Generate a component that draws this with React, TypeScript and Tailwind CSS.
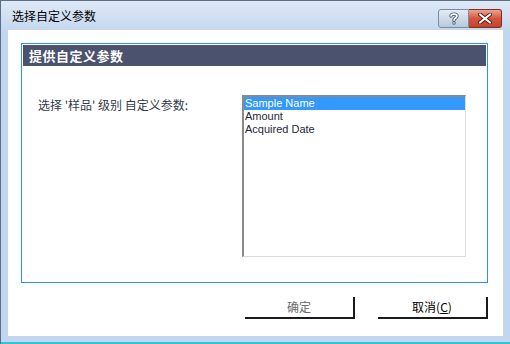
import React from "react";

const cjk = "font-['SimSun','Noto_Sans_CJK_SC',sans-serif]";

const items = ["Sample Name", "Amount", "Acquired Date"];

const FlatButton = ({ children, dim }: { children: React.ReactNode; dim?: boolean }) => (
  <div
    className={`w-[110px] h-[22px] flex items-center justify-center border-r-2 border-b-2 border-r-[#1a1a1a] border-b-[#1a1a1a] text-[12px] ${cjk} ${dim ? "text-[#6a6a6a]" : "text-black"}`}
  >
    {children}
  </div>
);

export default function App() {
  return (
    <div className="w-[510px] h-[344px] bg-[#c2d6f0] border-l border-t border-[#5c6f86] flex flex-col overflow-hidden">
      {/* title bar */}
      <div className="h-[29px] shrink-0 flex items-center bg-gradient-to-b from-[#dfe9f6] to-[#c5d8ef] pl-[11px] pr-[8px]">
        <div className={`text-[12px] text-black ${cjk} mt-[1px]`}>选择自定义参数</div>
        <div className="ml-auto flex items-start h-[19px] self-start mt-[8px]">
          <div className="w-[31px] h-[19px] rounded-l-[3px] border border-[#7a8ca5] bg-gradient-to-b from-[#e3ebf5] via-[#cfdbea] to-[#b7c8dc] flex items-center justify-center">
            <svg width="10" height="13" viewBox="0 0 10 13">
              <path
                d="M2 4 C2 1.5 8 1.5 8 4 C8 6 5 6 5 8.2"
                fill="none"
                stroke="#4f5f78"
                strokeWidth="3.4"
                strokeLinecap="round"
              />
              <path
                d="M2 4 C2 1.5 8 1.5 8 4 C8 6 5 6 5 8.2"
                fill="none"
                stroke="#ffffff"
                strokeWidth="1.6"
                strokeLinecap="round"
              />
              <circle cx="5" cy="11" r="1.7" fill="#4f5f78" />
              <circle cx="5" cy="11" r="0.8" fill="#ffffff" />
            </svg>
          </div>
          <div className="w-[33px] h-[19px] rounded-r-[3px] border border-l-0 border-[#8a2a1e] bg-gradient-to-b from-[#e8a493] via-[#d4553c] to-[#c0442c] flex items-center justify-center">
            <svg width="14" height="11" viewBox="0 0 14 11">
              <path d="M2 1.5 L12 9.5 M12 1.5 L2 9.5" stroke="#5a1a10" strokeWidth="4" strokeLinecap="round" />
              <path d="M2 1.5 L12 9.5 M12 1.5 L2 9.5" stroke="#ffffff" strokeWidth="2.2" strokeLinecap="round" />
            </svg>
          </div>
        </div>
      </div>

      {/* frame + client */}
      <div className="flex-1 flex flex-col px-[7px] pb-[6px]">
        <div className="flex-1 bg-white flex flex-col pl-[13px] pr-[15px] pt-[13px]">
          {/* group box */}
          <div className="h-[240px] border border-[#2a8ff7] p-[1px] flex flex-col">
            <div className="h-[21px] bg-[#4a526d] flex items-center pl-[6px]">
              <span className={`text-[13px] font-bold text-white ${cjk} tracking-[0.5px]`}>提供自定义参数</span>
            </div>
            <div className="flex flex-1 pl-[15px] pr-[20px] pt-[29px] pb-[24px]">
              <div className={`text-[12px] text-[#333a48] ${cjk} pt-[1px] flex-1`}>
                选择 '样品' 级别 自定义参数:
              </div>
              <div className="w-[224px] border-t-2 border-l-2 border-t-[#8a8a8a] border-l-[#8a8a8a] border-r border-b border-r-[#dcdcdc] border-b-[#dcdcdc] bg-white">
                {items.map((t, i) => (
                  <div
                    key={t}
                    className={`h-[13px] leading-[13px] pl-[1px] text-[11px] font-['Tahoma','Liberation_Sans',sans-serif] ${i === 0 ? "bg-[#3399ff] text-white" : "text-[#1e2838]"}`}
                  >
                    {t}
                  </div>
                ))}
              </div>
            </div>
          </div>

          {/* buttons */}
          <div className="flex justify-end gap-[23px] pt-[14px]">
            <FlatButton dim>确定</FlatButton>
            <FlatButton>
              取消(<span className="underline">C</span>)
            </FlatButton>
          </div>
        </div>
      </div>
      <div className="h-[2px] shrink-0 bg-[#33c4dc]" />
    </div>
  );
}
